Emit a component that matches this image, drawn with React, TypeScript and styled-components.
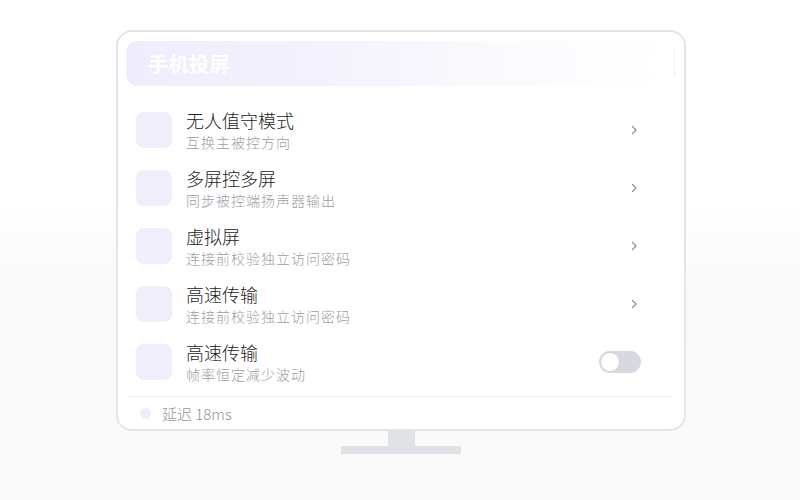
import React from "react";
import styled, { createGlobalStyle } from "styled-components";

const Global = createGlobalStyle`
  html, body { margin: 0; padding: 0; }
  body {
    width: 800px;
    height: 500px;
    overflow: hidden;
    background: linear-gradient(180deg, #ffffff 0%, #ffffff 40%, #f9f9fa 58%, #fafafb 100%);
    font-family: "Noto Sans CJK SC", "Noto Sans", sans-serif;
  }
`;

const Stage = styled.div`
  width: 800px;
  height: 500px;
  display: flex;
  flex-direction: column;
  align-items: flex-start;
  padding: 30px 0 0 116px;
  box-sizing: border-box;
`;

const Monitor = styled.div`
  display: flex;
  flex-direction: column;
  align-items: center;
  width: 570px;
`;

const Screen = styled.div`
  width: 570px;
  height: 401px;
  box-sizing: border-box;
  border: 2px solid #e3e5ea;
  border-radius: 16px;
  background: #ffffff;
  padding: 9px 9px 0 8px;
  display: flex;
  flex-direction: column;
`;

const Header = styled.div`
  height: 45px;
  border-radius: 12px 0 0 12px;
  background: linear-gradient(90deg, #efecfc 0%, #f4f2fd 35%, #fbfbfe 70%, #ffffff 100%);
  display: flex;
  align-items: center;
  justify-content: space-between;
  padding: 0 16px 0 22px;
  position: relative;
`;

const HeaderEdge = styled.div`
  position: absolute;
  right: 0;
  top: 9px;
  bottom: 9px;
  width: 1px;
  background: #eff0f3;
`;

const HeaderTitle = styled.div`
  color: #ffffff;
  font-size: 20px;
  font-weight: 700;
  letter-spacing: 0.5px;
`;

const HeaderGhost = styled.div`
  color: #ffffff;
  font-size: 18px;
  font-weight: 700;
`;

const List = styled.div`
  display: flex;
  flex-direction: column;
  margin-top: 15px;
  padding: 0 34px 0 10px;
`;

const Row = styled.div`
  height: 58px;
  display: flex;
  align-items: center;
  gap: 14px;
`;

const IconBox = styled.div`
  width: 36px;
  height: 36px;
  border-radius: 8px;
  background: #f1eefc;
  flex-shrink: 0;
`;

const Texts = styled.div`
  flex: 1;
  display: flex;
  flex-direction: column;
  margin-top: 2px;
`;

const Title = styled.div`
  font-size: 18px;
  line-height: 21px;
  font-weight: 300;
  color: #1c1c21;
`;

const Sub = styled.div`
  font-size: 14px;
  line-height: 20px;
  font-weight: 300;
  color: #9c9da5;
  letter-spacing: 1px;
  margin-top: 1px;
`;

const Chevron = styled.div`
  width: 20px;
  display: flex;
  justify-content: center;
  margin-right: -3px;
  color: #8e9098;
`;

const Toggle = styled.div`
  width: 42px;
  height: 22px;
  border-radius: 11px;
  background: #d6d9df;
  box-sizing: border-box;
  padding: 1px;
  display: flex;
  align-items: center;
`;

const Knob = styled.div`
  width: 20px;
  height: 20px;
  border-radius: 50%;
  background: #ffffff;
  box-sizing: border-box;
  border: 1px solid #d0d3d9;
`;

const Divider = styled.div`
  height: 1px;
  background: #eeeff2;
  margin: 5px 3px 0 2px;
`;

const Footer = styled.div`
  flex: 1;
  display: flex;
  align-items: center;
  gap: 11px;
  padding-left: 14px;
`;

const Dot = styled.div`
  width: 11px;
  height: 11px;
  border-radius: 50%;
  background: #efecfc;
`;

const FooterText = styled.div`
  font-size: 15px;
  font-weight: 300;
  color: #92939b;
`;

const Neck = styled.div`
  width: 27px;
  height: 15px;
  background: #dfe2e6;
`;

const Base = styled.div`
  width: 120px;
  height: 8px;
  background: #dfe2e6;
`;

const rows = [
  { t: "无人值守模式", s: "互换主被控方向", toggle: false },
  { t: "多屏控多屏", s: "同步被控端扬声器输出", toggle: false },
  { t: "虚拟屏", s: "连接前校验独立访问密码", toggle: false },
  { t: "高速传输", s: "连接前校验独立访问密码", toggle: false },
  { t: "高速传输", s: "帧率恒定减少波动", toggle: true },
];

const ChevronIcon = () => (
  <svg width="8" height="12" viewBox="0 0 8 12" fill="none">
    <path d="M2.5 2.5 L6 6 L2.5 9.5" stroke="currentColor" strokeWidth="1.3" strokeLinecap="round" strokeLinejoin="round" />
  </svg>
);

export default function App() {
  return (
    <>
      <Global />
      <Stage>
        <Monitor>
          <Screen>
            <Header>
              <HeaderTitle>手机投屏</HeaderTitle>
              <HeaderGhost>投屏</HeaderGhost>
              <HeaderEdge />
            </Header>
            <List>
              {rows.map((r, i) => (
                <Row key={i}>
                  <IconBox />
                  <Texts>
                    <Title>{r.t}</Title>
                    <Sub>{r.s}</Sub>
                  </Texts>
                  {r.toggle ? (
                    <Toggle>
                      <Knob />
                    </Toggle>
                  ) : (
                    <Chevron>
                      <ChevronIcon />
                    </Chevron>
                  )}
                </Row>
              ))}
            </List>
            <Divider />
            <Footer>
              <Dot />
              <FooterText>延迟 18ms</FooterText>
            </Footer>
          </Screen>
          <Neck />
          <Base />
        </Monitor>
      </Stage>
    </>
  );
}
